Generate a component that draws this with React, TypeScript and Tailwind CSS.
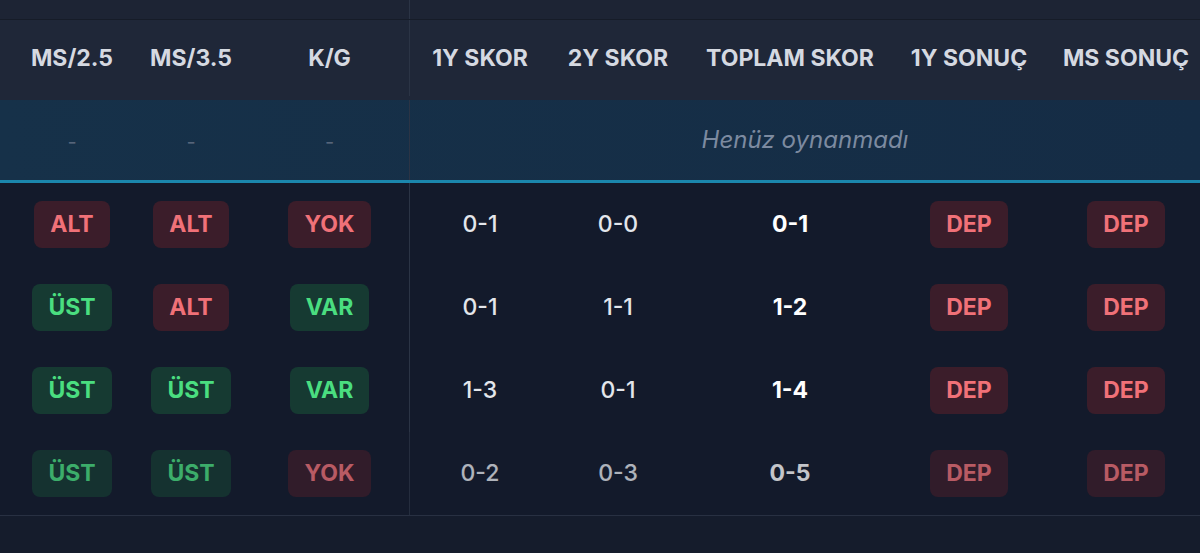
const cols = [
  'w-[144px]',
  'w-[94px]',
  'w-[172px] pl-3',
  'w-[140px]',
  'w-[136px]',
  'w-[208px]',
  'w-[150px]',
  'w-[156px] pl-2',
]

const headers = ['MS/2.5', 'MS/3.5', 'K/G', '1Y SKOR', '2Y SKOR', 'TOPLAM SKOR', '1Y SONUÇ', 'MS SONUÇ']

type Tone = 'red' | 'green'

const rows: { badges: [string, Tone][]; scores: string[]; results: string[]; faded?: boolean }[] = [
  { badges: [['ALT', 'red'], ['ALT', 'red'], ['YOK', 'red']], scores: ['0-1', '0-0', '0-1'], results: ['DEP', 'DEP'] },
  { badges: [['ÜST', 'green'], ['ALT', 'red'], ['VAR', 'green']], scores: ['0-1', '1-1', '1-2'], results: ['DEP', 'DEP'] },
  { badges: [['ÜST', 'green'], ['ÜST', 'green'], ['VAR', 'green']], scores: ['1-3', '0-1', '1-4'], results: ['DEP', 'DEP'] },
  { badges: [['ÜST', 'green'], ['ÜST', 'green'], ['YOK', 'red']], scores: ['0-2', '0-3', '0-5'], results: ['DEP', 'DEP'], faded: true },
]

function Badge({ label, tone }: { label: string; tone: Tone }) {
  const style =
    tone === 'red'
      ? 'bg-[#3b1d2a] text-[#f07178]'
      : 'bg-[#163a32] text-[#4ade80]'
  return (
    <span className={`flex h-[47px] items-center rounded-lg px-4 text-[23px] font-bold ${style}`}>
      {label}
    </span>
  )
}

function Cell({ i, children }: { i: number; children: React.ReactNode }) {
  return (
    <div className={`flex shrink-0 items-center justify-center ${cols[i]} ${i === 2 ? 'border-r border-[#2b3445]' : ''}`}>
      {children}
    </div>
  )
}

export default function App() {
  return (
    <div
      className="flex h-[553px] w-[1200px] flex-col overflow-hidden bg-[#151c2c]"
      style={{ fontFamily: 'Inter, "Noto Sans", sans-serif' }}
    >
      {/* top strip */}
      <div className="flex h-[20px] border-b border-[#161c28] bg-[#1d2434]">
        <div className="w-[410px] border-r border-[#2b3445]" />
      </div>

      {/* header */}
      <div className="flex h-[80px] bg-[#1f2738] pb-[4px] text-[23px] font-bold text-[#d5d9e1]">
        {headers.map((h, i) => (
          <Cell key={h} i={i}>
            {h}
          </Cell>
        ))}
      </div>

      {/* not played */}
      <div className="flex h-[83px] border-b-[3px] border-[#1b87ad] bg-gradient-to-r from-[#163149] to-[#152c45]">
        {[0, 1, 2].map((i) => (
          <Cell key={i} i={i}>
            <span className="pt-1 text-[20px] text-[#56657a]">-</span>
          </Cell>
        ))}
        <div className="flex flex-1 items-center justify-center text-[24px] italic text-[#7c8aa0]">
          Henüz oynanmadı
        </div>
      </div>

      {/* rows */}
      <div className="border-b border-[#283042] bg-[#131a2b]">
        {rows.map((r, ri) => (
          <div key={ri} className={`flex h-[83px] ${r.faded ? 'opacity-75' : ''}`}>
            {r.badges.map(([label, tone], i) => (
              <Cell key={i} i={i}>
                <Badge label={label} tone={tone} />
              </Cell>
            ))}
            {r.scores.map((s, i) => (
              <Cell key={'s' + i} i={i + 3}>
                <span className={`text-[23px] ${i === 2 ? 'font-bold text-white' : 'font-medium text-[#e3e6eb]'}`}>{s}</span>
              </Cell>
            ))}
            {r.results.map((s, i) => (
              <Cell key={'r' + i} i={i + 6}>
                <Badge label={s} tone="red" />
              </Cell>
            ))}
          </div>
        ))}
      </div>
      <div className="flex-1 bg-[#151c2c]" />
    </div>
  )
}
